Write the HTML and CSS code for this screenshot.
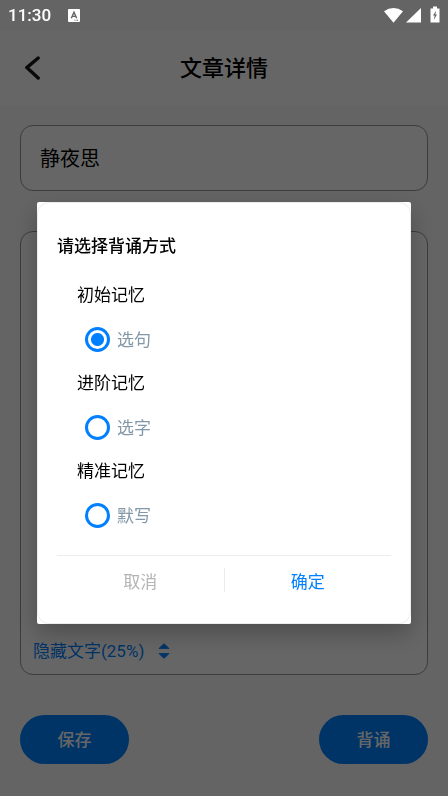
FILE: index.html
```html
<!DOCTYPE html>
<html lang="zh-CN">
<head>
<meta charset="utf-8">
<meta name="viewport" content="width=device-width, initial-scale=1">
<title>文章详情</title>
<link rel="stylesheet" href="styles.css">
</head>
<body>
<div class="page">
  <header class="topbar">
    <button class="back" type="button" aria-label="返回">
      <svg width="16" height="26" viewBox="0 0 16 26"><path d="M14.200 3 2.800 12.600 14.200 23" fill="none" stroke="#181820" stroke-width="3.400" stroke-linecap="round" stroke-linejoin="round"/></svg>
    </button>
    <h1 class="heading">文章详情</h1>
  </header>
  <main class="content">
    <input class="title-input" type="text" value="静夜思" aria-label="标题">
    <section class="article">
      <button class="hide-text" type="button">
        <span>隐藏文字(25%)</span>
        <svg width="12" height="18" viewBox="0 0 12 18"><path d="M1 6.500 5 2.400q1-1 2 0l4 4.100zM1 11.500h10l-4 4.100q-1 1-2 0z" fill="#007fff" stroke="#007fff" stroke-width=".8" stroke-linejoin="round"/></svg>
      </button>
    </section>
    <div class="actions">
      <button class="pill" type="button">保存</button>
      <button class="pill" type="button">背诵</button>
    </div>
  </main>
</div>

<div class="overlay">
  <div class="statusbar">
    <span class="clock">11:30</span>
    <svg width="12" height="13" viewBox="0 0 12 13"><rect width="12" height="13" rx="1" fill="#fff"/><path d="M3.300 9.200 6 3.200l2.700 6M4.300 7.400h3.400" fill="none" stroke="#646464" stroke-width="1.400"/><path d="M6.500 11.200h1M8.500 11.200h1.500" stroke="#646464"/></svg>
    <svg class="signals" width="58" height="18" viewBox="0 0 58 18"><path d="M1 5.200Q10.500-1 20 5.200L10.500 16.800z" fill="#fff"/><path d="M38 2V16.500H23z" fill="#fff"/><path d="M47.500 2.500H50V.5h4v2h2.500v14h-9z" fill="#fff"/><path d="M53.200 4.500 50 9.500h1.700l-.9 4.500L54 8.500h-1.700z" fill="#646464"/></svg>
  </div>
  <div class="stage">
    <form class="dialog" role="dialog" aria-labelledby="dialog-title">
      <div class="panel">
        <h2 class="dialog-title" id="dialog-title">请选择背诵方式</h2>
        <div class="modes">
          <p class="mode-name">初始记忆</p>
          <label class="option"><input class="radio" type="radio" name="mode" checked><span>选句</span></label>
          <p class="mode-name">进阶记忆</p>
          <label class="option"><input class="radio" type="radio" name="mode"><span>选字</span></label>
          <p class="mode-name">精准记忆</p>
          <label class="option"><input class="radio" type="radio" name="mode"><span>默写</span></label>
        </div>
        <div class="dialog-actions">
          <button class="choice cancel" type="button">取消</button>
          <span class="separator"></span>
          <button class="choice confirm" type="button">确定</button>
        </div>
      </div>
    </form>
  </div>
</div>
</body>
</html>
```
FILE: styles.css
```css
* {
  box-sizing: border-box;
}

body {
  margin: 0;
  background: #fafafa;
  color: #000;
  font-family: Roboto, "Noto Sans CJK SC", sans-serif;
  font-size: 17px;
}

button,
input {
  margin: 0;
  padding: 0;
  border: 0;
  background: none;
  color: inherit;
  font: inherit;
}

h1,
h2,
p {
  margin: 0;
}

svg {
  display: block;
}

.page {
  display: flex;
  flex-direction: column;
  min-height: 100vh;
  padding-top: 30px;
}

.topbar {
  display: grid;
  grid-template-columns: 48px 1fr 48px;
  align-items: center;
  height: 75px;
  background: #fff;
}

.back {
  padding-left: 24px;
}

.heading {
  padding-bottom: 4px;
  font-size: 22px;
  font-weight: 500;
  text-align: center;
}

.content {
  display: flex;
  flex: 1;
  flex-direction: column;
  gap: 40px;
  padding: 20px 20px 32px;
}

.title-input {
  width: 100%;
  height: 66px;
  padding: 0 19px 2px;
  border: 1px solid #969696;
  border-radius: 13px;
  background: #fff;
  font-size: 20px;
}

.article {
  display: flex;
  flex: 1;
  align-items: flex-end;
  padding: 0 12px 10px;
  border: 1px solid #969696;
  border-radius: 13px;
  background: #fff;
}

.hide-text {
  display: flex;
  align-items: center;
  gap: 14px;
  color: #007fff;
  line-height: 26px;
}

.actions {
  display: flex;
  justify-content: space-between;
}

.pill {
  width: 109px;
  height: 49px;
  padding-bottom: 2px;
  border-radius: 25px;
  background: #007fff;
  color: #fff;
  font-weight: 500;
}

.overlay {
  position: fixed;
  inset: 0;
  display: flex;
  flex-direction: column;
  background: rgba(0, 0, 0, 0.6);
}

.statusbar {
  display: flex;
  align-items: center;
  gap: 17px;
  height: 30px;
  padding: 0 7px 0 8px;
  color: #fff;
}

.clock {
  font-size: 17px;
  font-weight: 500;
}

.signals {
  margin-left: auto;
}

.stage {
  display: flex;
  flex: 1;
  align-items: center;
  padding: 0 37px;
}

.dialog {
  width: 100%;
  border-radius: 2px;
  background: #fff;
  box-shadow: 0 10px 24px rgba(0, 0, 0, 0.25);
}

.panel {
  padding: 29px 19px 19px;
  border: 1px solid #ececec;
  border-radius: 12px;
}

.dialog-title {
  font-size: 17px;
  font-weight: 500;
  line-height: 28px;
}

.modes {
  padding: 13px 20px 18px;
}

.mode-name {
  line-height: 44px;
}

.option {
  display: flex;
  align-items: center;
  gap: 7px;
  height: 44px;
  padding-left: 8px;
  color: #8298a8;
}

.option span {
  padding-bottom: 2px;
}

.radio {
  width: 25px;
  height: 25px;
  border: 3px solid #007fff;
  border-radius: 50%;
  appearance: none;
}

.radio:checked {
  background: radial-gradient(circle, #007fff 6px, transparent 7px);
}

.dialog-actions {
  display: flex;
  align-items: center;
  height: 49px;
  border-top: 1px solid #ececec;
}

.choice {
  flex: 1;
  height: 100%;
}

.separator {
  width: 1px;
  height: 24px;
  background: #ececec;
}

.cancel {
  color: #b4b4b4;
}

.confirm {
  color: #007fff;
}
```
